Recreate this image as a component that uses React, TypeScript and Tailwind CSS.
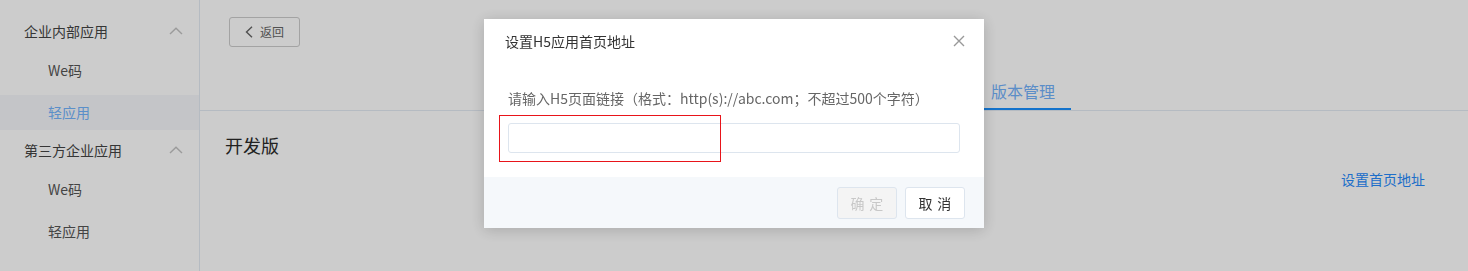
import { useState } from 'react'

const FONT = { fontFamily: '"Noto Sans CJK SC", "Noto Sans", sans-serif' }

type Group = { title: string; items: string[] }

const GROUPS: Group[] = [
  { title: '企业内部应用', items: ['We码', '轻应用'] },
  { title: '第三方企业应用', items: ['We码', '轻应用'] },
]

function ChevronUp() {
  return (
    <svg width="14" height="8" viewBox="0 0 14 8" fill="none">
      <polyline points="1,7 7,1.2 13,7" stroke="#c2c2c2" strokeWidth="1.4" />
    </svg>
  )
}

function Sidebar() {
  return (
    <aside className="w-[200px] shrink-0 border-r border-[#e3eaf3] bg-white pt-[11px]">
      {GROUPS.map((g, gi) => (
        <div key={g.title}>
          <div className="flex h-10 items-center justify-between pl-6 pr-[16px] text-[14px] text-[#444]">
            <span>{g.title}</span>
            <ChevronUp />
          </div>
          <ul className="mt-[2px] space-y-[7px]">
            {g.items.map((it, ii) => {
              const active = gi === 0 && ii === 1
              return (
                <li
                  key={it}
                  className={
                    active
                      ? 'flex h-[35px] items-center bg-[#f6f7fb] pl-12 text-[14px] text-[#72b3fc]'
                      : 'flex h-[35px] items-center pl-12 text-[14px] text-[#555]'
                  }
                >
                  {it}
                </li>
              )
            })}
          </ul>
        </div>
      ))}
    </aside>
  )
}

function Main() {
  return (
    <main className="flex-1">
      <div className="flex h-[111px] flex-col border-b border-[#e3eaf3]">
        <div className="pl-[29px] pt-[17px]">
          <button className="flex h-[30px] w-[71px] items-center justify-center gap-[7px] rounded-[3px] border border-[#cccccc] bg-white text-[12px] text-[#666]">
            <svg width="8" height="12" viewBox="0 0 8 12" fill="none">
              <polyline points="7,0.8 1.5,6 7,11.2" stroke="#666" strokeWidth="1.4" />
            </svg>
            <span>返回</span>
          </button>
        </div>
        {/* tab strip: the tabs left of this one sit behind the dialog */}
        <div className="mt-auto flex pl-[784px]">
          <div className="h-[34px] w-[87px] border-b-2 border-[#1a90fe] pl-[7px] pt-[5px] text-[16px] leading-[20px] text-[#72b1fb]">
            版本管理
          </div>
        </div>
      </div>
      <div className="pl-[25px] pr-[43px] pt-[22px]">
        <h2 className="text-[18px] leading-[24px] text-[#2a2a2a]">开发版</h2>
        <div className="mt-[12px] flex justify-end">
          <a className="text-[14px] leading-[20px] text-[#268afc]">设置首页地址</a>
        </div>
      </div>
    </main>
  )
}

function UrlDialog() {
  const [url, setUrl] = useState('')
  return (
    <div className="fixed inset-0 bg-black/20">
      <div className="mx-auto mt-[19px] w-[500px] bg-white shadow-[0_2px_14px_rgba(0,0,0,0.18)]">
        <div className="flex h-[44px] items-center justify-between pl-[21px] pr-[19px]">
          <span className="text-[14px] text-[#333]">设置H5应用首页地址</span>
          <svg width="12" height="12" viewBox="0 0 12 12" fill="none">
            <path d="M1 1L11 11M11 1L1 11" stroke="#999" strokeWidth="1.4" />
          </svg>
        </div>
        <div className="relative px-6 pb-6 pt-[25px]">
          <p className="text-[14px] leading-[20px] text-[#666]">
            请输入H5页面链接（格式：http(s)://abc.com；不超过500个字符）
          </p>
          <input
            value={url}
            onChange={(e) => setUrl(e.target.value)}
            className="mt-[15px] block h-[30px] w-full rounded-[3px] border border-[#dde5ee] px-2 text-[14px] outline-none"
          />
          {/* red annotation box */}
          <div className="absolute left-[15px] top-[52px] h-[47px] w-[222px] border border-solid border-[#e8141a]" />
        </div>
        <div className="flex h-[51px] justify-end gap-2 bg-[#f5f8fb] pr-[19px] pt-[10px]">
          <button
            disabled
            className="h-8 w-[60px] rounded-[3px] border border-[#dde5ee] bg-[#f4f4f4] text-[14px] tracking-[0.34em] text-[#c8c8c8]"
          >
            <span className="mr-[-0.34em]">确定</span>
          </button>
          <button className="h-8 w-[60px] rounded-[3px] border border-[#dde5ee] bg-white text-[14px] tracking-[0.34em] text-[#333]">
            <span className="mr-[-0.34em]">取消</span>
          </button>
        </div>
      </div>
    </div>
  )
}

export default function App() {
  return (
    <div className="flex h-screen bg-white" style={FONT}>
      <Sidebar />
      <Main />
      <UrlDialog />
    </div>
  )
}
